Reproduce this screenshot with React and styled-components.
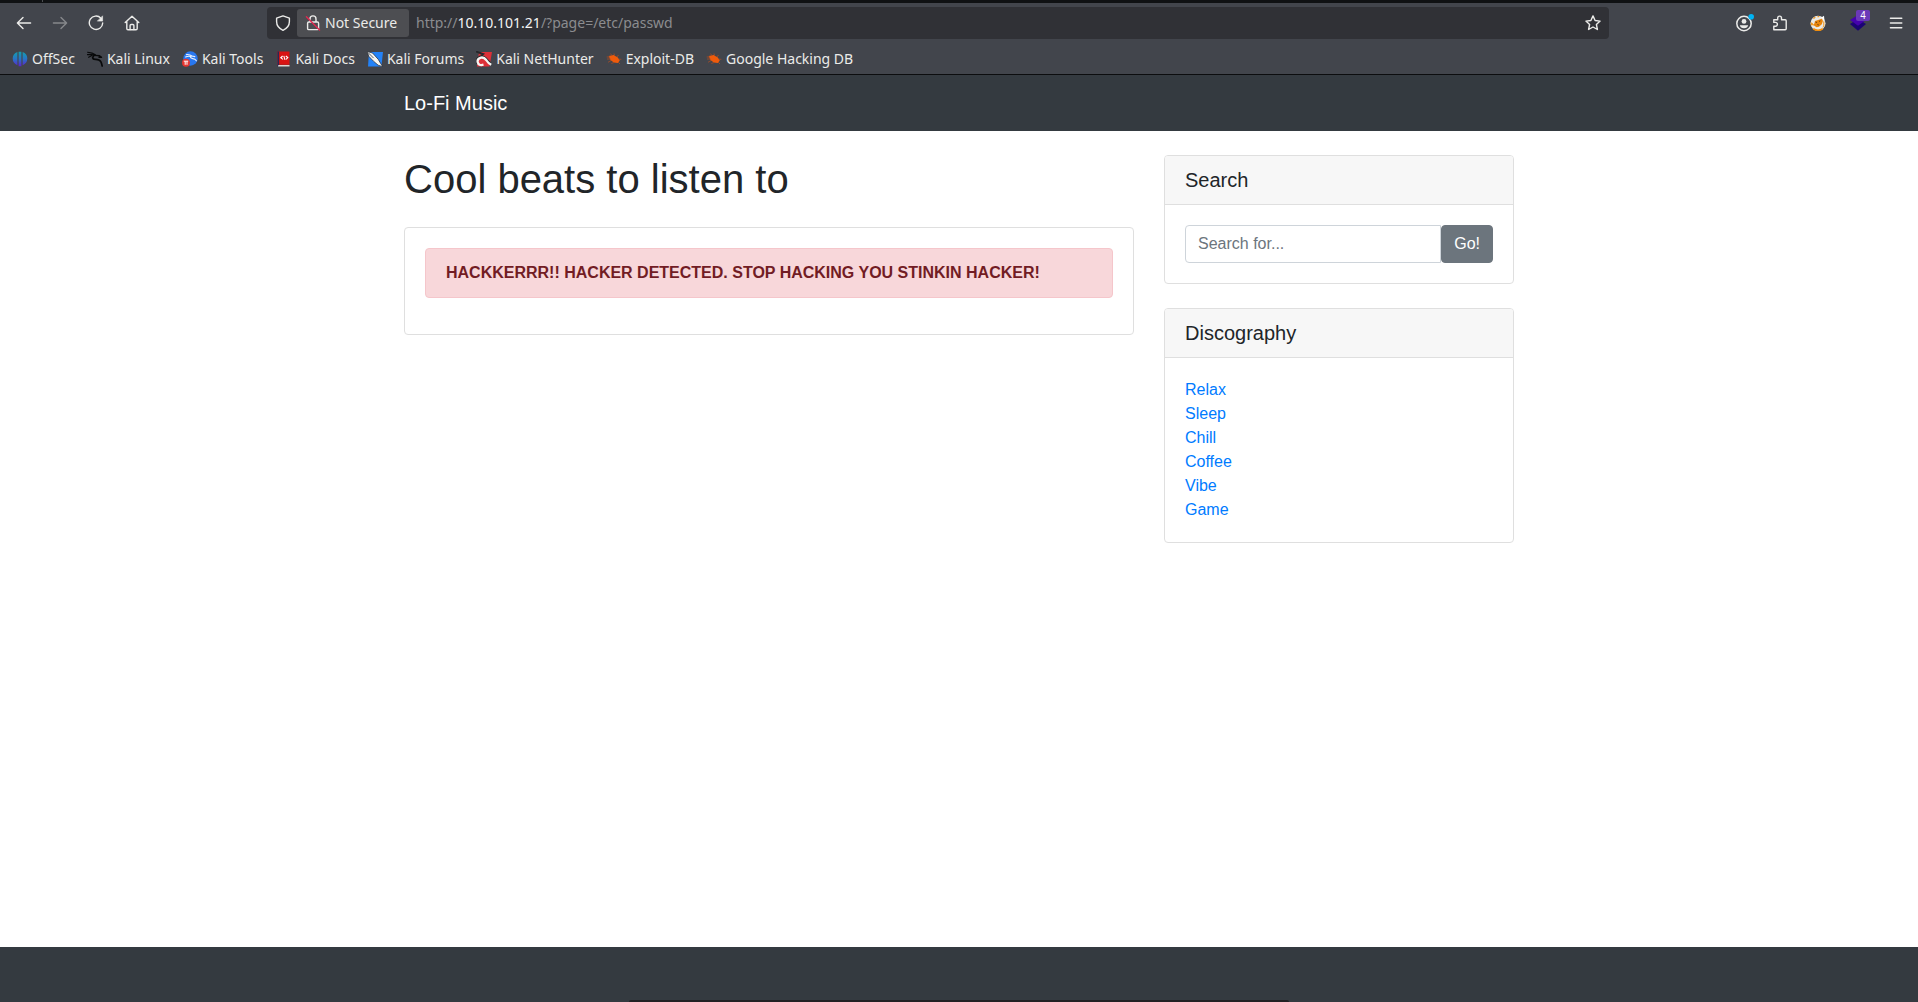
import React from 'react';
import styled, { createGlobalStyle } from 'styled-components';

const GlobalStyle = createGlobalStyle`
  *, *::before, *::after { box-sizing: border-box; }
  body {
    margin: 0;
    background: #fff;
    color: #212529;
    font: 400 16px/24px "Liberation Sans", Arial, sans-serif;
  }
`;

/* ---------- browser frame ---------- */

const Window = styled.div`
  position: relative;
  display: flex;
  flex-direction: column;
  min-height: 100vh;
`;

const Chrome = styled.header`
  background: #42454c;
  border-bottom: 1px solid #0c0d0f;
  color: #ebebe9;
  font-family: "Noto Sans", sans-serif;
  font-size: 14px;
  line-height: 20px;
`;

const TabStrip = styled.div`
  display: flex;
  height: 3px;
  padding-left: 42px;
  background: #0f1113;
`;

const TabSeparator = styled.span`
  width: 1px;
  height: 2px;
  background: #4b4d50;
`;

const Toolbar = styled.div`
  display: flex;
  align-items: center;
  height: 40px;
  padding: 0 4px 0 6px;
`;

const ToolButton = styled.button`
  position: relative;
  display: flex;
  align-items: center;
  justify-content: center;
  flex: none;
  width: ${(p) => (p.$wide ? 40 : 36)}px;
  height: 32px;
  padding: 0;
  border: 0;
  background: none;
  color: inherit;
  opacity: ${(p) => (p.disabled ? 0.4 : 1)};
`;

const Badge = styled.span`
  position: absolute;
  top: 3px;
  right: 8px;
  width: 14px;
  height: 11px;
  border-radius: 2px;
  background: #6b39b8;
  color: #fff;
  font-size: 10px;
  line-height: 11px;
`;

const AddressBar = styled.div`
  display: flex;
  align-items: center;
  flex: 1;
  min-width: 0;
  height: 32px;
  margin: 0 117px;
  padding: 0 2px;
  border-radius: 4px;
  background: #303136;
`;

const AddressButton = styled.button`
  display: flex;
  align-items: center;
  justify-content: center;
  flex: none;
  width: 28px;
  height: 28px;
  padding: 0;
  border: 0;
  background: none;
  color: inherit;
`;

const SecurityChip = styled.button`
  display: flex;
  align-items: center;
  gap: 4px;
  flex: none;
  width: 112px;
  height: 28px;
  padding: 0 0 0 8px;
  border: 0;
  border-radius: 3px;
  background: #4d4e52;
  color: inherit;
  font: inherit;
  white-space: nowrap;
`;

const Address = styled.div`
  flex: 1;
  min-width: 0;
  padding-left: 7px;
  color: #8b8c8f;
  white-space: nowrap;
  outline: 0;
`;

const Host = styled.span`
  color: #f4f4f4;
`;

const Bookmarks = styled.nav`
  display: flex;
  align-items: center;
  gap: 12px;
  height: 31px;
  padding: 0 12px;
`;

const Bookmark = styled.a`
  display: flex;
  align-items: center;
  gap: 4px;
  color: inherit;
  text-decoration: none;
  white-space: nowrap;
`;

/* ---------- web page ---------- */

const Container = styled.div`
  width: 100%;
  max-width: 1140px;
  margin: 0 auto;
  padding: 0 15px;
`;

const SiteBar = styled.nav`
  padding: 8px 0;
  background: #343a40;
`;

const Brand = styled.a`
  display: inline-block;
  padding: 5px 0;
  color: #fff;
  font-size: 20px;
  line-height: 30px;
  text-decoration: none;
  vertical-align: top;
`;

const Columns = styled(Container)`
  display: grid;
  grid-template-columns: minmax(0, 73fr) minmax(0, 35fr);
  gap: 30px;
  flex: 1;
  align-items: start;
`;

const PageTitle = styled.h1`
  margin: 24px 0;
  font-size: 40px;
  font-weight: 400;
  line-height: 48px;
`;

const Sidebar = styled.aside`
  display: grid;
  gap: 24px;
  padding: 24px 0;
`;

const Card = styled.section`
  border: 1px solid #dfdfdf;
  border-radius: 4px;
  background: #fff;
`;

const CardHeader = styled.h5`
  margin: 0;
  padding: 12px 20px;
  border-bottom: 1px solid #dfdfdf;
  border-radius: 3px 3px 0 0;
  background: #f7f7f7;
  font-size: 20px;
  font-weight: 400;
  line-height: 24px;
`;

const CardBody = styled.div`
  padding: 20px;
`;

const Alert = styled.div`
  margin-bottom: 16px;
  padding: 12px 20px;
  border: 1px solid #f5c6cb;
  border-radius: 4px;
  background: #f8d7da;
  color: #721c24;
  font-weight: 700;
`;

const SearchForm = styled.form`
  display: flex;
`;

const SearchInput = styled.input`
  flex: 1;
  min-width: 0;
  height: 38px;
  padding: 6px 12px;
  border: 1px solid #ced4da;
  border-radius: 4px 0 0 4px;
  background: #fff;
  color: #495057;
  font: inherit;

  &::placeholder { color: #6c757d; opacity: 1; }
`;

const SearchButton = styled.button`
  height: 38px;
  margin: 0;
  padding: 6px 12px;
  border: 1px solid #6c757d;
  border-radius: 4px;
  background: #6c757d;
  color: #fff;
  font: inherit;
`;

const LinkList = styled.ul`
  margin: 0;
  padding: 0;
  list-style: none;
`;

const TextLink = styled.a`
  color: #007bff;
  text-decoration: none;
`;

const Footer = styled.footer`
  height: 55px;
  background: #343a40;
`;

const DockEdge = styled.div`
  position: absolute;
  bottom: 0;
  left: 50%;
  width: 660px;
  height: 2px;
  border-radius: 4px 4px 0 0;
  background: #222124;
  transform: translateX(-50%);
`;

/* ---------- icons ---------- */

const Line = ({ children }) => (
  <svg width="16" height="16" viewBox="0 0 16 16" fill="none" stroke="currentColor"
    strokeWidth="1.4" strokeLinecap="round" strokeLinejoin="round" aria-hidden="true">
    {children}
  </svg>
);

const Picture = ({ children }) => (
  <svg width="16" height="16" viewBox="0 0 16 16" aria-hidden="true">{children}</svg>
);

const BackIcon = () => <Line><path d="M14.6 8H1.6M7 2.4 1.4 8 7 13.6" /></Line>;
const ForwardIcon = () => <Line><path d="M1.4 8h13M9 2.4 14.6 8 9 13.6" /></Line>;
const ReloadIcon = () => (
  <Line>
    <path d="M12.9 3.2A6.7 6.7 0 1 0 14.7 8" />
    <path d="M14.6 1.2v4.9H9.7z" fill="currentColor" strokeWidth=".6" />
  </Line>
);
const HomeIcon = () => (
  <Line>
    <path d="M1.2 7.6 8 1.2l6.8 6.4M2.8 6.4v7.2q0 1.2 1.2 1.2h8q1.2 0 1.2-1.2V6.4" />
    <path d="M6.1 14.6v-4q0-1.1 1-1.1h1.8q1 0 1 1.1v4" />
  </Line>
);
const ShieldIcon = () => (
  <Line><path d="M8 .9 14.4 3.2v3.4c0 4-2.4 7-6.4 8.7-4-1.7-6.4-4.7-6.4-8.7V3.2z" /></Line>
);
const LockIcon = () => (
  <Line>
    <path d="M5 7V3.9a3 3 0 0 1 6 0V7M3.8 7h8.6q1.2 0 1.2 1.2v5.2q0 1.2-1.2 1.2H3.8q-1.2 0-1.2-1.2V8.2Q2.6 7 3.8 7z" />
    <path d="M1.4 1.8 14.6 15" stroke="#e22850" />
  </Line>
);
const StarIcon = () => (
  <Line>
    <path d="m8 .9 2.1 4.6 5 .6-3.7 3.4 1 5L8 12l-4.4 2.5 1-5L.9 6.1l5-.6z" />
  </Line>
);
const AccountIcon = () => (
  <svg width="20" height="18" viewBox="0 0 20 18" aria-hidden="true">
    <circle cx="10" cy="9.5" r="7.2" fill="none" stroke="currentColor" strokeWidth="1.5" />
    <circle cx="10" cy="7.4" r="2.4" fill="currentColor" />
    <path d="M5.8 11.2h8.4q-.6 3-4.2 3t-4.2-3z" fill="currentColor" />
    <circle cx="17.2" cy="2.8" r="2.8" fill="#00b3f4" />
  </svg>
);
const PuzzleIcon = () => (
  <Line>
    <path d="M1.8 14.8v-3.6h1.7a1.9 1.9 0 0 0 0-3.8H1.8V4.8h3.9V3a1.9 1.9 0 0 1 3.8 0v1.8h3.7q1 0 1 1v8q0 1-1 1z" />
  </Line>
);
const FoxIcon = () => (
  <Picture>
    <circle cx="8" cy="8.3" r="7.5" fill="#e9e9e6" />
    <path d="M3.2 13.8q4.800 3.200 9.600 0" fill="none" stroke="#f08c0c" strokeWidth="1.8" />
    <path d="M.7 7.2 2.6 8l1 2L1 10.4zM2.6 3.4l2-1.6 1.2.4-1.4 1.6zM7.600.9h2l-.8 1.300H7.400z" fill="#f29a22" />
    <path d="m5 6 4.600-1.600 2.600-1 .8 2.300-1.200 3.500-2.800 2.600-2.400.4L4 10.600l-1.200-.4L4.400 8.600z" fill="#e8850c" />
    <path d="M10.600 3 14 .8l.4 4-1.600.600-.4-2z" fill="#fff" />
    <path d="M13.800 6.400v5l-1.200.8" fill="none" stroke="#ef9418" />
    <path d="m5.600 7.200 1.400.2M9 6.400l1.400-.6M7.400 9.600l1.400.4" stroke="#5b3511" strokeWidth=".9" />
  </Picture>
);
const LayersIcon = () => (
  <Picture>
    <path d="m0 9 8-5 8 5-8 6.8z" fill="#1b0474" />
    <path d="m0 5 8-5 8 5-8 5.7z" fill="#4502ad" />
  </Picture>
);
const MenuIcon = () => <Line><path d="M2.4 3.2h11.4M2.4 8h11.4M2.4 12.8h11.4" /></Line>;

const OffSecIcon = () => (
  <Picture>
    <defs>
      <linearGradient id="offsec" x1="0" y1="0" x2="0" y2="1">
        <stop offset="0" stopColor="#129fae" />
        <stop offset=".5" stopColor="#2874c5" />
        <stop offset="1" stopColor="#5c22cf" />
      </linearGradient>
    </defs>
    <path d="M5.4 1v13.2Q.7 12 .7 7.4T5.4 1zM6.6.7h2.800v14.6H6.600zM10.600 1q4.700 1.800 4.700 6.400t-4.700 6.800z" fill="url(#offsec)" />
  </Picture>
);
const LinuxIcon = () => (
  <Picture>
    <g fill="none" stroke="#08090a" strokeLinecap="round" strokeLinejoin="round">
      <path d="M.6 1.2 5 2l3.4 1.8M.4 3.6 5 3.4l3 1.2M1.6 6.2 5 4.6" strokeWidth="1.1" />
      <path d="M7 4.2 5.6 6.6q.4 2 3.2 1.8 3.6 0 5 2.2 1 2 1.4 4.4" strokeWidth="1.7" />
      <path d="m8 4.4 4.5.4 2 1.6-2.5-.2" strokeWidth="1.4" />
    </g>
  </Picture>
);
const ToolsIcon = () => (
  <Picture>
    <circle cx="8.5" cy="7.5" r="7.2" fill="#2877f0" />
    <path d="M4.500 3.600q3-.4 6 1.600M3.600 6q2.600-1.400 5.400-.4M8.400 5.600q0 1.800 2.400 2 2.400.2 3.600 2.200M10 5l2.800.6" fill="none" stroke="#e9f1fc" strokeWidth="1.100" strokeLinecap="round" />
    <circle cx="4" cy="11.8" r="4" fill="#e5352f" />
    <path d="M1.8 10.2h4.4M3.2 10.4v3.4M5 10.4v3.4" stroke="#fff" strokeWidth="1" />
  </Picture>
);
const DocsIcon = () => (
  <Picture>
    <path d="M2.5.5h12v13.3h-12z" fill="#d91313" />
    <path d="M2.5.5h1.6v14.8H2.5z" fill="#272a55" />
    <path d="M3.4 14h11.100v1.600H3z" fill="#ded5d2" />
    <path d="M7.600 5 5.800 6.800 8 8.400M10.800 5l2 1.600L11 8.400M8.800 4.800l1.200 4" fill="none" stroke="#fff" strokeWidth="1.100" />
  </Picture>
);
const ForumsIcon = () => (
  <Picture>
    <path d="M2 1h14l-1.6 14.500H1z" fill="#2382f7" />
    <path d="M0 .5 5.500 2l5.800 6.400 2.300 4 2.200 3.300-4.600-1.500-4.700-4L2 5.500z" fill="#f5f5f2" stroke="#24272c" strokeWidth=".7" />
    <path d="m1 1.500 5.600 5.600" stroke="#303238" strokeWidth=".8" />
  </Picture>
);
const NetHunterIcon = () => (
  <Picture>
    <path d="M3 1h13l-2.500 14.500H1z" fill="#dd3038" />
    <path d="M0 .5 7 3 5 4.500M1.500 12.500q-2-3.500 1-6Q6 4 9.500 7l5.500 6" fill="none" stroke="#26272b" strokeWidth="2" />
    <path d="M7.500 13.700Q2.600 15 1.700 11.300.9 7.700 5 6.600q3-.6 5.200 2.400 2 3.200 5 4.800" fill="none" stroke="#f6f5f3" strokeWidth="2.300" />
  </Picture>
);
const BugIcon = () => (
  <Picture>
    <path d="M2.600 5 7.600 4l4.200 2.600 2 3-2 2.400-4-.4L4.400 9z" fill="#ef5b0c" />
    <path d="M4 6H.7M4.600 8H1M5 9.500l-3 1.800M8 11.500l-2.700 1M6 4.300 4.300 2.800M8.500 4.500 8 2.500M10.800 6l1.700-2M12.800 8.200l2.600.1M12 11l2 2" stroke="#a94d24" strokeWidth=".8" />
  </Picture>
);

const bookmarks = [
  ['OffSec', OffSecIcon],
  ['Kali Linux', LinuxIcon],
  ['Kali Tools', ToolsIcon],
  ['Kali Docs', DocsIcon],
  ['Kali Forums', ForumsIcon],
  ['Kali NetHunter', NetHunterIcon],
  ['Exploit-DB', BugIcon],
  ['Google Hacking DB', BugIcon],
];

const discography = ['Relax', 'Sleep', 'Chill', 'Coffee', 'Vibe', 'Game'];

function BrowserChrome() {
  return (
    <Chrome>
      <TabStrip><TabSeparator /></TabStrip>
      <Toolbar>
        <ToolButton aria-label="Back"><BackIcon /></ToolButton>
        <ToolButton aria-label="Forward" disabled><ForwardIcon /></ToolButton>
        <ToolButton aria-label="Reload"><ReloadIcon /></ToolButton>
        <ToolButton aria-label="Home"><HomeIcon /></ToolButton>
        <AddressBar>
          <AddressButton aria-label="Tracking protection"><ShieldIcon /></AddressButton>
          <SecurityChip><LockIcon />Not Secure</SecurityChip>
          <Address role="textbox" aria-label="Address" contentEditable suppressContentEditableWarning spellCheck={false}>
            http://<Host>10.10.101.21</Host>/?page=/etc/passwd
          </Address>
          <AddressButton aria-label="Bookmark this page"><StarIcon /></AddressButton>
        </AddressBar>
        <ToolButton aria-label="Account"><AccountIcon /></ToolButton>
        <ToolButton aria-label="Extensions"><PuzzleIcon /></ToolButton>
        <ToolButton $wide aria-label="FoxyProxy"><FoxIcon /></ToolButton>
        <ToolButton $wide aria-label="Wappalyzer"><LayersIcon /><Badge>4</Badge></ToolButton>
        <ToolButton aria-label="Menu"><MenuIcon /></ToolButton>
      </Toolbar>
      <Bookmarks aria-label="Bookmarks">
        {bookmarks.map(([name, Icon]) => (
          <Bookmark key={name} href="#"><Icon />{name}</Bookmark>
        ))}
      </Bookmarks>
    </Chrome>
  );
}

export default function App() {
  return (
    <Window>
      <GlobalStyle />
      <BrowserChrome />
      <SiteBar>
        <Container><Brand href="#">Lo-Fi Music</Brand></Container>
      </SiteBar>
      <Columns as="main">
        <div>
          <PageTitle>Cool beats to listen to</PageTitle>
          <Card>
            <CardBody>
              <Alert role="alert">HACKKERRR!! HACKER DETECTED. STOP HACKING YOU STINKIN HACKER!</Alert>
            </CardBody>
          </Card>
        </div>
        <Sidebar>
          <Card>
            <CardHeader>Search</CardHeader>
            <CardBody>
              <SearchForm onSubmit={(e) => e.preventDefault()}>
                <SearchInput type="text" placeholder="Search for..." aria-label="Search for" />
                <SearchButton type="submit">Go!</SearchButton>
              </SearchForm>
            </CardBody>
          </Card>
          <Card>
            <CardHeader>Discography</CardHeader>
            <CardBody>
              <LinkList>
                {discography.map((name) => (
                  <li key={name}><TextLink href="#">{name}</TextLink></li>
                ))}
              </LinkList>
            </CardBody>
          </Card>
        </Sidebar>
      </Columns>
      <Footer />
      <DockEdge />
    </Window>
  );
}
